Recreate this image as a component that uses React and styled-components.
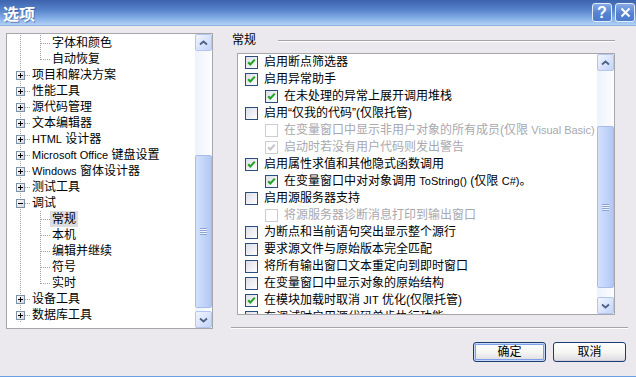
import styled, { createGlobalStyle } from "styled-components";

const GlobalStyle = createGlobalStyle`
  html, body {
    margin: 0;
    padding: 0;
    background: #ebe9ed;
  }
  body {
    font-family: "Liberation Sans", "Noto Sans CJK SC", sans-serif;
    font-size: 12px;
    color: #000;
  }
`;

const Window = styled.div`
  width: 636px;
  height: 377px;
  box-sizing: border-box;
  display: flex;
  flex-direction: column;
  background: #ebe9ed;
  border-bottom: 1px solid #6b9fe4;
  overflow: hidden;
`;

const TitleBar = styled.div`
  height: 25px;
  flex: none;
  display: flex;
  align-items: center;
  justify-content: space-between;
  padding: 0 1px 0 3px;
  background: linear-gradient(#3c63ad, #5784cb 40%, #86b0e7 75%, #b2d1f5);
  border-bottom: 1px solid #8db2e2;
`;

const Title = styled.span`
  color: #fff;
  font-family: "Noto Sans CJK SC", sans-serif;
  font-weight: bold;
  font-size: 16px;
  line-height: 20px;
  text-shadow: 1px 1px 0 rgba(20, 40, 100, 0.45);
`;

const Captions = styled.div`
  display: flex;
  gap: 3px;
`;

const CaptionButton = styled.div`
  width: 20px;
  height: 19px;
  box-sizing: border-box;
  border: 1px solid #e4ecf9;
  border-radius: 3px;
  background: linear-gradient(#86aae6, #5683cf 55%, #4c7acb);
  display: flex;
  align-items: center;
  justify-content: center;
  color: #fff;
  font: bold 16px "Liberation Sans", sans-serif;
`;

const Main = styled.div`
  flex: 1;
  display: flex;
  padding: 7px 0 0 6px;
  min-height: 0;
`;

const TreePanel = styled.div`
  width: 207px;
  height: 296px;
  box-sizing: border-box;
  border: 1px solid #a7a7ab;
  background: #fff;
  display: flex;
`;

const TreeRows = styled.div`
  flex: 1;
  padding: 1px 0 0 3px;
  overflow: hidden;
`;

const TreeRow = styled.div`
  height: 16px;
  display: flex;
  align-items: center;
  white-space: nowrap;
`;

const TreeLabel = styled.span`
  height: 16px;
  line-height: 16px;
  padding: 0 2px;
  background: ${(p) => (p.$selected ? "#dddce1" : "transparent")};
`;

const RightColumn = styled.div`
  width: 397px;
  margin-left: 18px;
  display: flex;
  flex-direction: column;
`;

const Header = styled.div`
  height: 20px;
  display: flex;
  align-items: flex-start;
`;

const HeaderText = styled.span`
  line-height: 14px;
  margin-left: 1px;
`;

const HeaderLine = styled.div`
  flex: 1;
  margin: 7px 13px 0 22px;
  border-top: 1px solid #a3a3a8;
  border-bottom: 1px solid #fff;
`;

const ListBox = styled.div`
  width: 378px;
  height: 262px;
  margin-left: 6px;
  box-sizing: border-box;
  border: 1px solid #a7a7ab;
  background: #fff;
  display: flex;
`;

const CheckRows = styled.div`
  flex: 1;
  padding-left: 7px;
  overflow: hidden;
`;

const CheckRow = styled.div`
  height: 17px;
  display: flex;
  align-items: center;
  padding-left: ${(p) => (p.$level === 2 ? 20 : 0)}px;
  white-space: nowrap;
  color: ${(p) => (p.$disabled ? "#a9a8ad" : "#000")};
`;

const CheckText = styled.span`
  margin-left: 6px;
  line-height: 17px;
`;

const Latin = styled.span`
  font-size: 11px;
`;

const Separator = styled.div`
  margin-top: 12px;
  border-top: 1px solid #a3a3a8;
  border-bottom: 1px solid #fff;
`;

const ButtonRow = styled.div`
  margin-top: 13px;
  display: flex;
  justify-content: flex-end;
  gap: 7px;
  padding-right: 2px;
`;

const Button = styled.div`
  width: 73px;
  height: 20px;
  box-sizing: border-box;
  border: 1px solid #1b3d73;
  border-radius: 3px;
  background: linear-gradient(#ffffff, #f4f4f2 55%, #dcd9e2);
  box-shadow: ${(p) =>
    p.$default ? "inset 0 0 0 1px #c6d9fb, inset 0 0 0 2px #7f9fe6" : "inset 0 -1px 0 #d2cfd8"};
  display: flex;
  align-items: center;
  justify-content: center;
  line-height: 18px;
`;

const ScrollBar = styled.div`
  width: 17px;
  flex: none;
  display: flex;
  flex-direction: column;
  background: linear-gradient(90deg, #eef2fb, #fcfdff);
`;

const ArrowButton = styled.div`
  width: 17px;
  height: 17px;
  flex: none;
  box-sizing: border-box;
  border: 1px solid #b4c6ee;
  border-radius: 2px;
  background: linear-gradient(135deg, #f1f5ff, #c3d4fa);
  display: flex;
  align-items: center;
  justify-content: center;
`;

const Track = styled.div`
  flex: 1;
  display: flex;
  flex-direction: column;
`;

const Thumb = styled.div`
  margin-top: ${(p) => p.$top}px;
  height: ${(p) => p.$height}px;
  box-sizing: border-box;
  border: 1px solid #a8bce9;
  border-radius: 2px;
  background: linear-gradient(90deg, #d3e0fd, #c0d2fa 60%, #b2c7f3);
  display: flex;
  align-items: center;
  justify-content: center;
`;

const Grip = styled.div`
  width: 7px;
  height: 7px;
  background: repeating-linear-gradient(#8aa3d8 0 1px, #eef3ff 1px 2px);
`;

function Txt({ children }) {
  const parts = children.split(/([A-Za-z][A-Za-z0-9#()]*(?: [A-Za-z][A-Za-z0-9#()]*)*)/);
  return parts.map((p, i) => (i % 2 ? <Latin key={i}>{p}</Latin> : p));
}

function Chevron({ down }) {
  return (
    <svg width="9" height="6" viewBox="0 0 9 6">
      <path
        d={down ? "M1 1.5 L4.5 4.5 L8 1.5" : "M1 4.5 L4.5 1.5 L8 4.5"}
        stroke="#4d6185"
        strokeWidth="1.8"
        fill="none"
      />
    </svg>
  );
}

function Scroll({ top, height }) {
  return (
    <ScrollBar>
      <ArrowButton>
        <Chevron />
      </ArrowButton>
      <Track>
        <Thumb $top={top} $height={height}>
          <Grip />
        </Thumb>
      </Track>
      <ArrowButton>
        <Chevron down />
      </ArrowButton>
    </ScrollBar>
  );
}

function Guide({ kind }) {
  const dot = { stroke: "#a0a0a0", strokeDasharray: "1 1" };
  const boxed = kind === "plus" || kind === "minus";
  return (
    <svg width="20" height="16" viewBox="0 0 20 16" shapeRendering="crispEdges">
      <line x1="10.5" y1="0" x2="10.5" y2={kind === "elbow" ? 9 : 16} {...dot} />
      {kind !== "pipe" && <line x1="11" y1="8.5" x2="20" y2="8.5" {...dot} />}
      {boxed && (
        <>
          <rect x="6.5" y="4.5" width="8" height="8" fill="url(#boxfill)" stroke="#8090a4" />
          <rect x="8" y="8" width="5" height="1" fill="#000" />
          {kind === "plus" && <rect x="10" y="6" width="1" height="5" fill="#000" />}
        </>
      )}
    </svg>
  );
}

function CheckBox({ checked, disabled }) {
  return (
    <svg width="13" height="13" viewBox="0 0 13 13" style={{ flex: "none" }}>
      <rect
        x="0.5"
        y="0.5"
        width="12"
        height="12"
        fill={disabled ? "#fff" : "url(#cbfill)"}
        stroke={disabled ? "#cdccd2" : "#2a4f7e"}
      />
      {checked && (
        <path
          d="M3.2 6.2 L5.3 8.4 L9.8 3.6"
          stroke={disabled ? "#c4c3c9" : "#22a325"}
          strokeWidth="2.1"
          fill="none"
        />
      )}
    </svg>
  );
}

const tree = [
  { label: "字体和颜色", guides: ["pipe", "tee"] },
  { label: "自动恢复", guides: ["pipe", "elbow"] },
  { label: "项目和解决方案", guides: ["plus"] },
  { label: "性能工具", guides: ["plus"] },
  { label: "源代码管理", guides: ["plus"] },
  { label: "文本编辑器", guides: ["plus"] },
  { label: "HTML 设计器", guides: ["plus"] },
  { label: "Microsoft Office 键盘设置", guides: ["plus"] },
  { label: "Windows 窗体设计器", guides: ["plus"] },
  { label: "测试工具", guides: ["plus"] },
  { label: "调试", guides: ["minus"] },
  { label: "常规", guides: ["pipe", "tee"], selected: true },
  { label: "本机", guides: ["pipe", "tee"] },
  { label: "编辑并继续", guides: ["pipe", "tee"] },
  { label: "符号", guides: ["pipe", "tee"] },
  { label: "实时", guides: ["pipe", "elbow"] },
  { label: "设备工具", guides: ["plus"] },
  { label: "数据库工具", guides: ["plus"] },
];

const options = [
  { label: "启用断点筛选器", checked: true },
  { label: "启用异常助手", checked: true },
  { label: "在未处理的异常上展开调用堆栈", checked: true, level: 2 },
  { label: "启用“仅我的代码”(仅限托管)" },
  { label: "在变量窗口中显示非用户对象的所有成员(仅限 Visual Basic)", level: 2, disabled: true },
  { label: "启动时若没有用户代码则发出警告", checked: true, level: 2, disabled: true },
  { label: "启用属性求值和其他隐式函数调用", checked: true },
  { label: "在变量窗口中对对象调用 ToString() (仅限 C#)。", checked: true, level: 2 },
  { label: "启用源服务器支持" },
  { label: "将源服务器诊断消息打印到输出窗口", level: 2, disabled: true },
  { label: "为断点和当前语句突出显示整个源行" },
  { label: "要求源文件与原始版本完全匹配" },
  { label: "将所有输出窗口文本重定向到即时窗口" },
  { label: "在变量窗口中显示对象的原始结构" },
  { label: "在模块加载时取消 JIT 优化(仅限托管)", checked: true },
  { label: "在调试时启用源代码单步执行功能" },
];

export default function App() {
  return (
    <>
      <GlobalStyle />
      <svg width="0" height="0" style={{ position: "absolute" }}>
        <defs>
          <linearGradient id="cbfill" x1="0" y1="0" x2="1" y2="1">
            <stop offset="0" stopColor="#dcdde6" />
            <stop offset="1" stopColor="#ffffff" />
          </linearGradient>
          <linearGradient id="boxfill" x1="0" y1="0" x2="1" y2="1">
            <stop offset="0" stopColor="#ffffff" />
            <stop offset="1" stopColor="#cfd3dc" />
          </linearGradient>
        </defs>
      </svg>
      <Window>
        <TitleBar>
          <Title>选项</Title>
          <Captions>
            <CaptionButton>?</CaptionButton>
            <CaptionButton>
              <svg width="11" height="11" viewBox="0 0 11 11">
                <path d="M1.5 1.5 L9.5 9.5 M9.5 1.5 L1.5 9.5" stroke="#fff" strokeWidth="2" />
              </svg>
            </CaptionButton>
          </Captions>
        </TitleBar>
        <Main>
          <TreePanel>
            <TreeRows>
              {tree.map((item) => (
                <TreeRow key={item.label}>
                  {item.guides.map((g, i) => (
                    <Guide key={i} kind={g} />
                  ))}
                  <TreeLabel $selected={item.selected}>
                    <Txt>{item.label}</Txt>
                  </TreeLabel>
                </TreeRow>
              ))}
            </TreeRows>
            <Scroll top={104} height={153} />
          </TreePanel>
          <RightColumn>
            <Header>
              <HeaderText>常规</HeaderText>
              <HeaderLine />
            </Header>
            <ListBox>
              <CheckRows>
                {options.map((o) => (
                  <CheckRow key={o.label} $level={o.level} $disabled={o.disabled}>
                    <CheckBox checked={o.checked} disabled={o.disabled} />
                    <CheckText>
                      <Txt>{o.label}</Txt>
                    </CheckText>
                  </CheckRow>
                ))}
              </CheckRows>
              <Scroll top={55} height={162} />
            </ListBox>
            <Separator />
            <ButtonRow>
              <Button $default>确定</Button>
              <Button>取消</Button>
            </ButtonRow>
          </RightColumn>
        </Main>
      </Window>
    </>
  );
}
